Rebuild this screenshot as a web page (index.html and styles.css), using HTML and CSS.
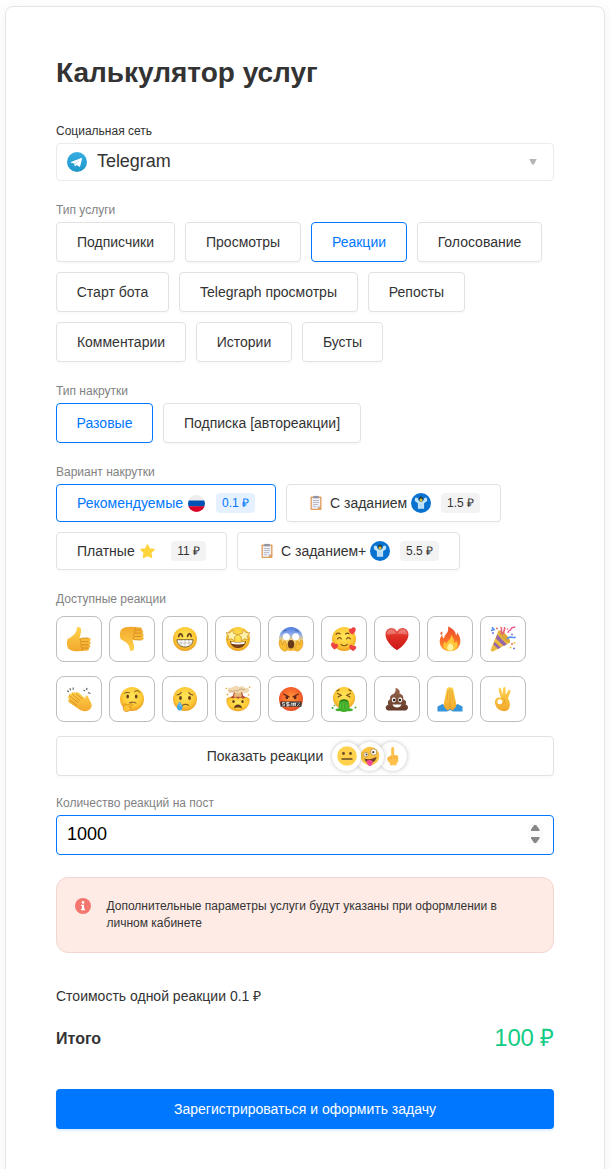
FILE: index.html
```html
<!DOCTYPE html>
<html lang="ru">
<head>
<meta charset="utf-8">
<title>Калькулятор услуг</title>
<link rel="stylesheet" href="styles.css">
</head>
<body>
<svg class="defs" width="0" height="0" aria-hidden="true">
  <defs>
    <radialGradient id="face" cx=".5" cy=".4" r=".62"><stop offset="0" stop-color="#ffe75a"/><stop offset=".65" stop-color="#fdc936"/><stop offset="1" stop-color="#ea9a1e"/></radialGradient>
    <radialGradient id="rage" cx=".5" cy=".45" r=".6"><stop offset="0" stop-color="#ff9a3c"/><stop offset=".6" stop-color="#f8682c"/><stop offset="1" stop-color="#dc4523"/></radialGradient>
    <linearGradient id="hand" x1="0" y1="0" x2="0" y2="1"><stop offset="0" stop-color="#ffd34c"/><stop offset="1" stop-color="#f2a82c"/></linearGradient>
    <linearGradient id="fear" x1="0" y1="0" x2="0" y2="1"><stop offset="0" stop-color="#4c7be0"/><stop offset=".3" stop-color="#8cabec"/><stop offset=".55" stop-color="#f5d376"/><stop offset="1" stop-color="#f6b52c"/></linearGradient>
    <linearGradient id="heart" x1="0" y1="0" x2="0" y2="1"><stop offset="0" stop-color="#e8645c"/><stop offset=".38" stop-color="#e03024"/><stop offset="1" stop-color="#c91616"/></linearGradient>
    <linearGradient id="flame" x1="0" y1="0" x2="0" y2="1"><stop offset="0" stop-color="#ee4a2b"/><stop offset=".6" stop-color="#f9702a"/><stop offset="1" stop-color="#fda42e"/></linearGradient>
    <linearGradient id="poo" x1="0" y1="0" x2="0" y2="1"><stop offset="0" stop-color="#9a6a50"/><stop offset="1" stop-color="#633a28"/></linearGradient>
    <linearGradient id="tg" x1="0" y1="0" x2="0" y2="1"><stop offset="0" stop-color="#37aee2"/><stop offset="1" stop-color="#1e96c8"/></linearGradient>
    <clipPath id="round"><circle cx="8.5" cy="8.5" r="8.5"/></clipPath>
    <symbol id="clipboard" viewBox="0 0 12 16">
      <rect x=".5" y="1.5" width="11" height="13.5" rx=".8" fill="#e0a060"/><path d="M1.900 3h8.200v8.200l-2.500 2.600H1.900z" fill="#eef0f5"/><path d="M10.100 11.200H7.600v2.600z" fill="#b9bfca"/>
      <path d="M3.300 .9h5.400v2.400H3.300z" fill="#8f96a3"/><path d="M3 5.500h6M3 7.500h6M3 9.500h5M3 11.500h3" stroke="#b5b7c3" stroke-width=".9"/>
    </symbol>
    <symbol id="helper" viewBox="0 0 20 20">
      <circle cx="10" cy="10" r="10" fill="#0872d0"/><path d="M6.900 15.700V10.200L3.800 8 4 5.200l1.200-1 .6 1.100 1-.5.4 2.200 1.500 1.500h2.600l1.500-1.500.4-2.200 1 .5.6-1.100 1.200 1 .2 2.800-3.100 2.200v5.500z" fill="#c3e3f8"/><path d="M8.200 4.500L10 3.200l1.800 1.300.3 2.600L10 8.800 7.900 7.100z" fill="#273d48"/><circle cx="10" cy="7" r="1.500" fill="#e4c52d"/><path d="M9 11v4.500M11 11v4.500" stroke="#91c5e9" stroke-width=".5"/>
    </symbol>
    <symbol id="thumb" viewBox="0 0 26 26">
      <path d="M1.800 12.800C4.500 11.500 8.500 9.200 10 6l1-4c.4-1.300 2.200-1.500 3.300-.3 1.400 1.700.9 4.600 0 7.300l-.8 3 8.800-.3c2.800 0 3.200 3 1 3.600 2 .4 1.900 3.100-.1 3.500 1.600.5 1.300 2.900-.5 3.200.9.9.2 2.500-1.500 2.600l-8.700.6c-4 .2-7.700-.7-9.500-2C.6 21.200 .3 15.500 1.800 12.800z" fill="url(#hand)"/><path d="M22.500 12l-7 .3c-1.900.7-1.900 2.800 0 3.200h7m-7 0c-1.500.8-1.400 2.800.2 3.400h6.800m-6.500 0c-1.300.8-1 2.700.5 3.100h5.500m-5.200.1c-1.200.7-1 2 0 2.600" fill="none" stroke="#cd811c" stroke-width=".7"/>
    </symbol>
  </defs>
</svg>
<main class="card">
  <h1 class="title">Калькулятор услуг</h1>

  <section class="field">
    <div class="label label-dark">Социальная сеть</div>
    <div class="select">
      <svg class="tg" viewBox="0 0 20 20"><circle cx="10" cy="10" r="10" fill="url(#tg)"/><path d="M3.900 10L14.300 5.900c.5-.2.900.1.7.9l-1.800 7.500c-.1.600-.5.700-1 .4L9.800 12.900l-1.400 1.300c-.4.300-.6.200-.7-.3l-.6-2.300-2.900-.9c-.5-.2-.5-.5-.3-.7z" fill="#fff"/><path d="M7.200 11.600l5.600-3.600-4.300 4.300-.4 1.800z" fill="#bcdcf0"/></svg>
      <span class="select-text">Telegram</span>
      <svg class="caret" viewBox="0 0 8 6"><path d="M.3 0h7.400L5 5.600H3z" fill="#b6b6b6"/></svg>
    </div>
  </section>

  <section class="field">
    <div class="label">Тип услуги</div>
    <div class="options">
      <button class="option w119">Подписчики</button><button class="option w116">Просмотры</button><button class="option active w96">Реакции</button><button class="option w125">Голосование</button>
      <button class="option w113">Старт бота</button><button class="option w179">Telegraph просмотры</button><button class="option w97">Репосты</button>
      <button class="option w130">Комментарии</button><button class="option w96">Истории</button><button class="option w81">Бусты</button>
    </div>
  </section>

  <section class="field">
    <div class="label">Тип накрутки</div>
    <div class="options"><button class="option active w97">Разовые</button><button class="option w198">Подписка [автореакции]</button></div>
  </section>

  <section class="field">
    <div class="label">Вариант накрутки</div>
    <div class="options">
      <button class="option variant active w220"><span>Рекомендуемые</span><svg class="flag" viewBox="0 0 17 17"><g clip-path="url(#round)"><path d="M0 0h17v6H0z" fill="#eee"/><path d="M0 5.500h17v6H0z" fill="#0052b4"/><path d="M0 11.300h17V17H0z" fill="#d80027"/></g></svg><span class="price">0.1 ₽</span></button>
      <button class="option variant w215"><svg class="clip"><use href="#clipboard"/></svg><span>С заданием</span><svg class="helper"><use href="#helper"/></svg><span class="price">1.5 ₽</span></button>
      <button class="option variant w171"><span>Платные</span><svg class="star" viewBox="0 0 14 14"><path d="M7 1.200l1.700 3.600 4.200.5-3.100 2.800.8 4.200L7 10.300l-3.600 2 .8-4.200-3.100-2.800 4.200-.5z" fill="#ffd43b" stroke="#ffd43b" stroke-width="1.700" stroke-linejoin="round"/></svg><span class="price">11 ₽</span></button>
      <button class="option variant w223"><svg class="clip"><use href="#clipboard"/></svg><span>С заданием+</span><svg class="helper"><use href="#helper"/></svg><span class="price">5.5 ₽</span></button>
    </div>
  </section>

  <section class="field">
    <div class="label label-reactions">Доступные реакции</div>
    <div class="reactions">
      <button class="reaction" aria-label="Нравится"><svg><use href="#thumb"/></svg></button>
      <button class="reaction" aria-label="Не нравится"><svg class="flip"><use href="#thumb"/></svg></button>
      <button class="reaction" aria-label="Улыбка"><svg viewBox="0 0 26 26"><circle cx="13" cy="13" r="12" fill="url(#face)"/><path d="M6.700 10.500C7.400 7 9.600 7 10.500 10.500M15.500 10.500c.9-3.500 3.100-3.500 3.800 0" fill="none" stroke="#65401c" stroke-width="1.600" stroke-linecap="round"/><path d="M5 13.700h16c.1 4.300-3.400 7.300-8 7.300s-8.100-3-8-7.300z" fill="#fff" stroke="#715126" stroke-width=".9"/><path d="M5.500 17h15M9 14v6M13 14v7M17 14v6" stroke="#a8a49a" stroke-width=".6"/></svg></button>
      <button class="reaction" aria-label="Восторг"><svg viewBox="0 0 26 26"><circle cx="13" cy="13" r="12" fill="url(#face)"/><path d="M7.500 3.800l1.400 3.700 4 1-3.300 2.600.2 4-3.400-2.300-3.900 1.200 1.200-3.900L1 6.800l4.200-.2zM18.500 3.800l2.300 2.800 4.200.2-2.700 3.300 1.200 3.900-3.900-1.200-3.400 2.300.2-4-3.300-2.600 4-1z" fill="#fff0aa" stroke="#c58a24" stroke-width=".7"/><path d="M5 15c4 1.500 12 1.500 16 0-.4 4.200-3.600 7.100-8 7.100S5.400 19.200 5 15z" fill="#794019"/><path d="M6 15.700c4 1.100 10 1.100 14 0l-.7 2c-4 1-8.600 1-12.600 0z" fill="#fff"/></svg></button>
      <button class="reaction" aria-label="Ужас"><svg viewBox="0 0 26 26"><circle cx="13" cy="13" r="12" fill="url(#fear)"/><circle cx="8.300" cy="10.700" r="3.500" fill="#fff"/><circle cx="17.700" cy="10.700" r="3.500" fill="#fff"/><path d="M5.200 6.200c1-1.500 2.300-1.900 3.800-1.800M17 4.400c1.600 0 2.800.6 3.700 1.800" fill="none" stroke="#3e5689" stroke-width=".8"/><ellipse cx="13" cy="18.300" rx="3.200" ry="4.300" fill="#67391b"/><path d="M2 14c-1.400 2-1.200 5 .1 7.200 1.300 3 4.300 5 6.300 3.400 1.500-1.500.5-3.200-.2-4.800-.5-2-.2-4-1-4.700-1.200-.6-1.900 1-1.800 2.500L4.500 19 3.200 14.300zM24 14c1.400 2 1.200 5-.1 7.200-1.300 3-4.300 5-6.300 3.400-1.500-1.500-.5-3.200.2-4.800.5-2 .2-4 1-4.700 1.200-.6 1.900 1 1.800 2.500l.9 1.400 1.300-4.700z" fill="#f9bd31" stroke="#ce841c" stroke-width=".5"/></svg></button>
      <button class="reaction" aria-label="Влюблённость"><svg viewBox="0 0 26 26"><circle cx="13" cy="13" r="12" fill="url(#face)"/><path d="M5 8.300c1.200-1.200 3-1.300 4.200-.4M14.500 8c1-.9 2.400-1 3.500-.3M6.500 13c.9-1.800 3-1.800 3.900 0M15.500 13c.9-1.800 3-1.800 3.900 0M10 18.300c1.800 1.700 4.500 1.700 6.300 0" fill="none" stroke="#7a4919" stroke-width="1.100" stroke-linecap="round"/><g fill="#ee4141"><path d="M21.500 8.500c-5-1.700-4.300-6.500-1-6 1-2.400 5-1.300 4.100 1.700-.4 1.900-1.400 3-3.100 4.300zM3.500 23.500C-.5 21-1 17 1.700 16.500c1.500 0 2 1 2 1.900 1.900-1.900 4.500.1 3 2.300-.7 1.200-1.800 2-3.200 2.800zM22 25c-4-1.700-5-6-2-6.200 1.200-.1 1.900.7 2 1.400 1.800-1.500 4.200.4 2.800 2.600-.6 1-1.500 1.700-2.800 2.200z"/></g></svg></button>
      <button class="reaction" aria-label="Сердце"><svg viewBox="0 0 26 26"><path d="M13 24.300C9 21.500 1.500 15.500 1.500 8.500 1.500 1.300 10.200 0 13 5.500c2.800-5.500 11.500-4.200 11.500 3 0 7-7.500 13-11.500 15.800z" fill="url(#heart)"/><path d="M2.800 8.500C2.900 3 9.500 1.700 12.500 7.500zM13.500 7.500c3-5.800 9.600-4.500 9.700 1z" fill="#fff" opacity=".24"/></svg></button>
      <button class="reaction" aria-label="Огонь"><svg viewBox="0 0 26 26"><path d="M11 .5c5 2 7.800 5.300 8.100 9 .8-.9 1-2 .8-3.200 2.600 2.700 3.900 6.700 3.400 10.200-.6 5-4.300 8.700-10.300 8.700S2.700 21.300 2.700 15.500c0-3 1.200-5 2.500-6.600.1 2 .8 3 1.900 3.500C7.500 7.500 12.500 7.500 11 .5zM4.800 5.600c-1.800 1.200-1.600 3-.5 3.500C5.700 8 5.800 6.600 4.800 5.600z" fill="url(#flame)"/><path d="M14 9c3.800 4.300 2.900 6.500 3.400 8 1-.3 1.400-1.400 1.500-2.500 3.900 5.500.1 10.500-5.500 10.500s-9.500-4.500-5.200-10c.1 1.600.6 2.400 1.500 2.800.3-3.600 4.800-4 4.300-8.800z" fill="#ffc536"/><path d="M13.300 17c4.300 2.600 4 7.800 0 7.800s-4.400-4.300 0-7.800z" fill="#fff2a0"/></svg></button>
      <button class="reaction" aria-label="Праздник"><svg viewBox="0 0 26 26"><path d="M8.500 4.500C14 6 18 10 20.200 16.500L2.500 25.800.5 24.300z" fill="#e9b941"/><path d="M7.300 8.500l9.500 10-3 1.600L5.900 12.500zM4.500 16l6.200 5.600-2.500 1.300-4.700-4.300z" fill="#9464ac"/><ellipse cx="14.300" cy="10.500" rx="2.600" ry="7.800" transform="rotate(-43 14.300 10.500)" fill="#dca837"/><path d="M17 13c2.500-3.500 4-1 8.700-1.600M1 4.500l3-1-2-2.300" fill="none" stroke="#538ff0" stroke-width="1.700"/><path d="M13 8.500C8.800 5 14 4 10.500 1M14 7.500c-1.500-3 2-3 .3-6.500" fill="none" stroke="#e7607e" stroke-width="1.600"/><path d="M18 7c0-4 2-1 3-4s3 0 4-2.500" fill="none" stroke="#e75791" stroke-width="1.400"/><g fill="#f16c54"><circle cx="7" cy="2.500" r="1"/><circle cx="22" cy="18" r="1"/><circle cx="17.500" cy="3" r=".8"/></g><g fill="#6c75de"><circle cx="3" cy="7" r="1"/><circle cx="22" cy="8.500" r=".9"/><circle cx="24" cy="22.500" r="1"/></g><g fill="#f4c338"><circle cx="24.500" cy="17" r="1"/><circle cx="20.500" cy="21.500" r="1"/></g></svg></button>

      <button class="reaction" aria-label="Аплодисменты"><svg viewBox="0 0 26 26"><path d="M3.200 9.400c-.3-1.700 1.300-2.500 2.700-1.600-.1-1.700 1.400-2.300 2.700-1.300l1 .7c.3-1.400 1.600-1.600 2.800-.7l7.100 6.200-.2-1.700c0-1.600 1.700-2 2.600-.6l2.700 5.500c2 3.500 1.200 6-1.600 8-3.300 2.200-7.500 1.300-10.700-1.200L3 16.600C1.500 15.400 2 13.600 3.700 13.900 1.800 12.400 1.500 10.700 3.200 9.400z" fill="url(#hand)" /><path d="M3.200 9.400l9 7.500M3.700 13.900l7.300 5.800M5.900 7.800l8 6.800M9.600 7.200l7 6" fill="none" stroke="#cb811e" stroke-width=".8"/><path d="M1 4.800l2 .8M3.800 2.300l.9 2M7.200 1.500v2.200M17.500 4l1.600 1M21 1.800l-.4 2.400M22 6.500l2.300 1" stroke="#62676c" stroke-width="1.200"/></svg></button>
      <button class="reaction" aria-label="Раздумье"><svg viewBox="0 0 26 26"><circle cx="13" cy="13" r="12" fill="url(#face)"/><ellipse cx="8.700" cy="10.500" rx="1.300" ry="1.900" fill="#653d1d"/><ellipse cx="17.200" cy="10.500" rx="1.300" ry="1.900" fill="#653d1d"/><path d="M5.500 7.300c1.500-1.100 3.300-1.300 5-.6M15.500 5.700c1.800-1.600 4-1.200 5.200.6M10.500 16.700c2-.8 4.500-.8 6.500.3" fill="none" stroke="#755023" stroke-width="1" stroke-linecap="round"/><path d="M5 18.500c1-1.500 1.800-.7 1.700.7l5.500-1.500c2-.3 2 1.600.5 2l-2.700.8c3.500.3 1.300 5.300-2.800 5-3 .1-3.500-3.500-2.200-7z" fill="#ffc435" stroke="#cf841b" stroke-width=".7"/></svg></button>
      <button class="reaction" aria-label="Грусть"><svg viewBox="0 0 26 26"><circle cx="13" cy="13" r="12" fill="url(#face)"/><ellipse cx="8.500" cy="12" rx="1.400" ry="2" fill="#653d1d"/><ellipse cx="17.500" cy="12" rx="1.400" ry="2" fill="#653d1d"/><path d="M5 9c1.800-.3 3.400-1.100 4.200-2.600M16.800 6.400C17.600 7.900 19.200 8.700 21 9M10.500 19.500c1.500-1.700 4.500-1.700 6 0" fill="none" stroke="#755023" stroke-width="1.100" stroke-linecap="round"/><path d="M7.500 15.500c1.800 2 3 4.200 3 6 0 4-5.500 4-5.500 0 0-2 1.300-4 2.500-6z" fill="#46a8e9"/><path d="M7.500 17l1.200 3" stroke="#a7dcfa" stroke-width=".8"/></svg></button>
      <button class="reaction" aria-label="Взрыв мозга"><svg viewBox="0 0 26 26"><path d="M1.500 12.500l3-1.800 3 1 5.500-1 5.500 1 3-1 3 1.800C25.500 20 20 25.300 13 25.300S.5 20 1.500 12.500z" fill="url(#face)"/><path d="M5 11.500l3-2 .8-3.500h8.400l.8 3.500 3 2-3 1.300-2.500-1.300-2.500 1.300-2.700-1.300-2.300 1z" fill="#bb5035"/><path d="M10 5h6l.8 5.500-2 .6-2-.6-2 .7-1.800-.7z" fill="#e6b77c"/><path d="M3 5.500C1.800 2.500 4.800.8 7 1.900 8.300-.5 12.500-.4 14 1.100c2-1.700 5-.9 5.600.9C23 1.200 25.600 3.500 23.500 5.700c-2 1.900-6 1.200-7 .2C14 8 10.200 7.300 9 6.100 7 7.800 3.800 7.500 3 5.500z" fill="#f0d9b0"/><path d="M4 5c2-.8 3 1 5 0s4 1 5-1 3.500 0 6-.7" fill="none" stroke="#bc9060" stroke-width=".7"/><path d="M1.500 8l1.700.8M2 2L.8 2.800M24.300 8.500l-1.500.8M24 1.500l1.300-.6" stroke="#e8a030" stroke-width="1.300"/><ellipse cx="8.500" cy="15.500" rx="1.200" ry="1.500" fill="#65391c"/><ellipse cx="17.500" cy="15.500" rx="1.200" ry="1.500" fill="#65391c"/><path d="M9 22.500c.1-5.200 7.900-5.200 8 0-2-1.200-6-1.200-8 0z" fill="#65391c"/></svg></button>
      <button class="reaction" aria-label="Злость"><svg viewBox="0 0 26 26"><circle cx="13" cy="13" r="12" fill="url(#rage)"/><ellipse cx="8.800" cy="11.500" rx="1.400" ry="1.800" fill="#5a241a"/><ellipse cx="17.200" cy="11.500" rx="1.400" ry="1.800" fill="#5a241a"/><path d="M5.800 8.200l5.200 2.600M20.200 8.200L15 10.800" stroke="#6b281a" stroke-width="1.300" stroke-linecap="round"/><path d="M2.500 15.500h21v5.200h-21z" fill="#302d2c"/><path d="M7 16.500H4.500v1.600h2v1.700h-2.500M9.800 16v4.500M11.500 16.500H8.300v1.600h2.900v1.700H8M13.500 16.500l-.5 3.500M16 16.200l-1 4M18 16.200l-1 4M14 17.600h4M14 19h4M22 16.300l-3 4M19.500 16.700h.8M21.500 19.600h.8" fill="none" stroke="#fff" stroke-width=".7"/></svg></button>
      <button class="reaction" aria-label="Отвращение"><svg viewBox="0 0 26 26"><circle cx="13" cy="12" r="11" fill="url(#face)"/><path d="M6.500 7.500l3.700 1.800L7 11M19.500 7.500l-3.700 1.800L19 11M6 5l2-1.200M20 5l-2-1.200" fill="none" stroke="#795119" stroke-width="1.200" stroke-linecap="round"/><path d="M8 17c0-5 10-5 10 0l.4 5.200c1.600.2 3.500.5 3.600 1.600.1 1.500-3.500 1.700-5.500 1.500-3 1.200-6.300.7-8-.2-3 .2-4.200-.6-4-1.500.1-1 2-.8 3.300-1.300z" fill="#43ae2c"/><path d="M8.500 15.700c1.700-2.800 7.300-2.800 9 0-2-.9-7-.9-9 0z" fill="#386e1c"/><path d="M9.500 18v4M12.500 17v6M16 18v5" stroke="#62bf39" stroke-width=".8"/><g fill="#43ae2c"><circle cx="1.500" cy="22" r="1"/><circle cx="24.500" cy="21.500" r="1"/><circle cx="3.500" cy="19.500" r=".8"/></g></svg></button>
      <button class="reaction" aria-label="Какашка"><svg viewBox="0 0 26 26"><path d="M11.500 2c3.500.8 4.800 3 4 5.500 3.500 1 4.300 3.400 3.600 5.700 3.200.8 3.600 3.300 2.500 5.200 3.400.8 3.500 6-1.400 6.200H5.900C.8 24.600.4 19.700 4.400 18.400c-1.200-2-.2-4.500 2-5.200-1.200-2.800.8-4.300 3.100-5.200 1.700-1.200 2.500-3.500 2-6z" fill="url(#poo)"/><ellipse cx="9.800" cy="13.800" rx="2" ry="2.600" fill="#fff"/><ellipse cx="16.200" cy="13.800" rx="2" ry="2.600" fill="#fff"/><circle cx="10.100" cy="14" r="1.200" fill="#271c18"/><circle cx="15.900" cy="14" r="1.200" fill="#271c18"/><path d="M8.500 18.500h9c-.9 3.900-8.100 3.900-9 0z" fill="#fff"/></svg></button>
      <button class="reaction" aria-label="Спасибо"><svg viewBox="0 0 26 26"><path d="M.5 20.500l5-2.500 7.500 4.500 7.500-4.500 5 2.500v5H16l-3-1.500-3 1.500H.5z" fill="#3594da"/><path d="M12.700 1.500c-1.700-.8-2.600.2-3.100 2.300L8 12c-1 4.500-1.700 7-.8 9l3.300 3.500L13 22.700l2.500 1.800 3.300-3.500c.9-2 .2-4.500-.8-9l-1.600-8.200c-.5-2.100-1.400-3.100-3.100-2.300z" fill="url(#hand)"/><path d="M13 2.500v20M11.200 4L10 14M14.800 4L16 14" stroke="#dc972a" stroke-width=".7"/></svg></button>
      <button class="reaction" aria-label="Окей"><svg viewBox="0 0 26 26"><path d="M8.800 2c1.200-.7 2.200.2 2.500 1.700L12.500 9l.7-7c.3-1.500 2.200-1.400 2.300.2L15.800 9l2.500-4.500c.9-1.400 2.600-.6 2.200.9L18 12.500c2.100 3.500 2.700 7.500.7 10.500-1.700 2.500-5 2.600-7.700 1.400-4-1.200-6.300-5.400-6.100-8.900.3-3.500 3.500-4.700 6.100-3.700L8.800 5z" fill="url(#hand)"/><circle cx="9.800" cy="15.700" r="2.500" fill="#fff"/><path d="M12.700 12.300c2.200.7 2.500 3.500.6 5.200" fill="none" stroke="#dc952a" stroke-width=".8"/></svg></button>
    </div>
    <button class="more"><span>Показать реакции</span><span class="stack">
      <span class="chip"><svg viewBox="0 0 20 20"><circle cx="10" cy="10" r="9.800" fill="#ffd14c"/><circle cx="6.500" cy="7.500" r="1.400" fill="#684b22"/><circle cx="13.500" cy="7.500" r="1.400" fill="#684b22"/><path d="M5 13h10" stroke="#684b22" stroke-width="1.300" stroke-linecap="round"/></svg></span>
      <span class="chip"><svg viewBox="0 0 20 20"><circle cx="10" cy="10" r="9.300" fill="#fbc440"/><circle cx="6" cy="8.600" r="2.300" fill="#fff" stroke="#b38435" stroke-width=".7"/><circle cx="13.700" cy="6" r="3.200" fill="#fff" stroke="#b38435" stroke-width=".8"/><circle cx="6.400" cy="8.500" r=".9" fill="#4f3922"/><circle cx="13.300" cy="6.200" r="1.100" fill="#4f3922"/><path d="M4.500 12.500c4 1.500 8 .7 12-1.700-.1 4-3.500 6.300-7 6.200-2.900-.1-4.700-1.900-5-4.500z" fill="#71422c"/><path d="M6.500 15c1.900-1.400 4.500-1.400 6 0 .3 3-.6 5-2.500 5s-3.300-2.200-3.500-5z" fill="#f34b96"/></svg></span>
      <span class="chip"><svg viewBox="0 0 20 20"><path d="M8.200 10V2.700c0-2.200 3-2.200 3 0V9l2 .3c1-.3 2.200.5 2.100 1.700v3.300c0 1.500-.7 2.500-1.700 3.200v1.700H7v-2c-1.500-1.300-3-3-2.800-4.500 0-1.600 1-1.800 1.800-1.600 0-1.300 1.100-2 2.200-1.100z" fill="#ffc04c"/><path d="M6 11v3m2.200-4v3.500m3-4v3.800m2.300-3.500v3.500" stroke="#e59e35" stroke-width=".6"/></svg></span>
    </span></button>
  </section>

  <section class="field field-quantity">
    <div class="label">Количество реакций на пост</div>
    <div class="quantity"><input class="quantity-input" type="text" value="1000" aria-label="Количество"><svg class="spinner" viewBox="0 0 15 20"><path d="M0 0h15v20H0z" fill="#fafafa"/><path d="M3 7V5.600L6.200 1h1.900l3.400 4.600V7zM3 13v1.400L6.200 19h1.900l3.400-4.600V13z" fill="#878787"/></svg></div>
  </section>

  <div class="notice">
    <svg class="info" viewBox="0 0 16 16"><circle cx="8" cy="8" r="8" fill="#f4776f"/><circle cx="8" cy="4.400" r="1.300" fill="#fff"/><path d="M6 6.700h3v4.100h1v1.400H6v-1.400h1V8H6z" fill="#fff"/></svg>
    <p class="notice-text">Дополнительные параметры услуги будут указаны при оформлении в личном кабинете</p>
  </div>

  <div class="cost">Стоимость одной реакции 0.1 ₽</div>
  <div class="total"><b class="total-name">Итого</b><span class="total-sum">100 ₽</span></div>
  <button class="submit">Зарегистрироваться и оформить задачу</button>
</main>
</body>
</html>
```
FILE: styles.css
```css
* { box-sizing: border-box; }
html { height: 1169px; overflow: hidden; }
body { margin: 0; height: 1169px; overflow: hidden; padding: 6px 6px 0 5px; background: #fff; color: #333; font: 14px/16px "Liberation Sans", Arial, sans-serif; }
button { font: inherit; color: inherit; margin: 0; white-space: nowrap; }
svg { display: block; flex: none; }
.defs { position: absolute; }
.card { height: 1200px; padding: 49px 50px 0; background: #fff; border: 1px solid #e4e4e4; border-radius: 8px; box-shadow: 0 4px 20px rgba(0,0,0,.05); }
.title { margin: 0 0 33px; height: 34px; font-size: 28px; line-height: 34px; font-weight: 700; }
.field { margin-bottom: 21px; }
.label { height: 16px; margin-bottom: 4px; font-size: 12px; color: #828282; }
.label-dark { color: #333; }
.label-reactions { margin-bottom: 9px; }
.select { display: flex; align-items: center; height: 38px; padding: 0 16px 2px 10px; border: 1px solid #ebebeb; border-radius: 4px; }
.tg { width: 20px; height: 20px; margin-top: 1px; }
.select-text { margin-left: 10px; font-size: 18px; line-height: 22px; flex: 1; letter-spacing: -.05px; }
.caret { width: 8px; height: 6px; margin-top: 1px; }
.options { display: flex; flex-wrap: wrap; gap: 10px; }
.option { display: flex; align-items: center; justify-content: center; height: 40px; padding: 0; background: #fff; border: 1px solid #e2e2e2; border-radius: 4px; box-shadow: 0 2px 2px rgba(0,0,0,.025); }
.active { border-color: #0077ff; color: #0077ff; }
.variant { height: 38px; justify-content: flex-start; padding: 0 20px; }
.w81 { width: 81px; } .w96 { width: 96px; } .w97 { width: 97px; } .w113 { width: 113px; }
.w116 { width: 116px; } .w119 { width: 119px; } .w125 { width: 125px; } .w130 { width: 130px; }
.w171 { width: 171px; } .w179 { width: 179px; } .w198 { width: 198px; } .w215 { width: 215px; }
.w220 { width: 220px; } .w223 { width: 223px; }
.flag { width: 17px; height: 17px; margin-left: 5px; }
.star { width: 15px; height: 15px; margin-left: 5px; }
.clip { width: 12px; height: 16px; margin: 0 8px 0 3px; }
.helper { width: 20px; height: 20px; margin-left: 4px; }
.price { margin-left: auto; height: 20px; padding: 0 6px; border-radius: 4px; background: #f3f3f3; font-size: 12px; line-height: 20px; }
.active .price { background: #e6f1ff; }
.reactions { display: grid; grid-template-columns: repeat(9, 46px); gap: 14px 7px; margin-bottom: 14px; }
.reaction { display: flex; align-items: center; justify-content: center; height: 46px; padding: 0; background: #fff; border: 1px solid #bdbdbd; border-radius: 8px; }
.reaction svg { width: 26px; height: 26px; }
.flip { transform: scaleY(-1); }
.more { display: flex; align-items: center; justify-content: center; width: 100%; height: 40px; padding: 0 0 0 4px; background: #fff; border: 1px solid #e2e2e2; border-radius: 4px; box-shadow: 0 2px 2px rgba(0,0,0,.025); }
.stack { display: flex; margin-left: 9px; }
.chip { display: flex; align-items: center; justify-content: center; width: 29px; height: 29px; margin-right: -6px; border-radius: 50%; background: #fff; box-shadow: 0 0 4px rgba(0,0,0,.25); }
.chip:first-child { z-index: 3; } .chip:nth-child(2) { z-index: 2; } .chip:last-child { margin-right: 0; }
.chip svg { width: 20px; height: 20px; }
.field-quantity { margin: -2px 0 22px; }
.quantity { display: flex; align-items: center; height: 40px; padding: 0 10px; border: 1px solid #0077ff; border-radius: 4px; }
.quantity-input { flex: 1; min-width: 0; height: 34px; padding: 0 0 2px; border: 0; outline: 0; background: transparent; font: 18px "Liberation Sans", Arial, sans-serif; color: #000; }
.spinner { width: 15px; height: 20px; margin-top: -2px; }
.notice { display: flex; height: 76px; padding: 20px 30px 0 18px; background: #ffebe6; border: 1px solid #f2d6d0; border-radius: 12px; }
.info { width: 16px; height: 16px; }
.notice-text { margin: 0 0 0 15.5px; font-size: 12px; line-height: 17px; }
.cost { margin-top: 35px; }
.total { display: flex; align-items: center; justify-content: space-between; height: 28px; margin-top: 20px; }
.total-name { font-size: 16px; padding-top: 1px; }
.total-sum { font-size: 24px; line-height: 28px; letter-spacing: -.2px; color: #12cc85; }
.submit { display: block; width: 100%; height: 40px; margin-top: 37px; padding: 0; border: 0; border-radius: 4px; background: #0077ff; color: #fff; box-shadow: 0 2px 2px rgba(0,119,255,.12); }
```
